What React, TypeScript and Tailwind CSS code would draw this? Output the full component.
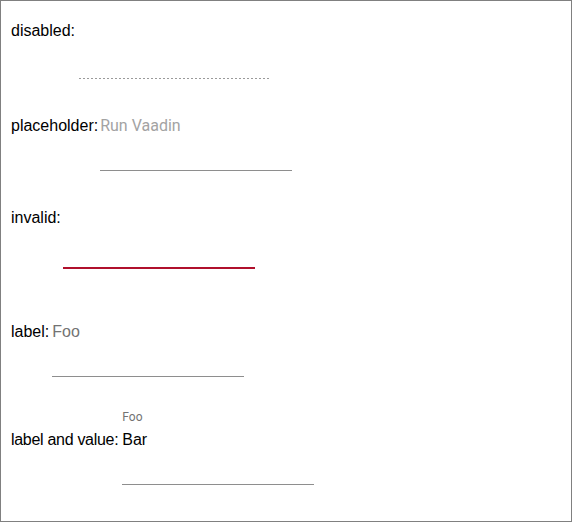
import React from "react";

const sans = "font-['Liberation_Sans',Arial,sans-serif]";
const roboto = "font-['Roboto','Liberation_Sans',sans-serif]";

export default function App() {
  return (
    <div
      className={`h-screen w-full border border-[#808080] bg-white pl-[10px] pt-[21px] text-[16px] text-black ${sans}`}
    >
      {/* disabled */}
      <div className="flex items-start gap-[4px]">
        <span className="leading-[18px]">disabled:</span>
        <div className="w-[192px]">
          <div className="h-[18px]" />
          <div className="mt-[38px] h-px bg-[linear-gradient(to_right,#9a9a9a_50%,transparent_50%)] bg-[length:4px_1px]" />
        </div>
      </div>

      {/* placeholder */}
      <div className="mt-[38px] flex items-start gap-[2px]">
        <span className="leading-[18px]">placeholder:</span>
        <div className="w-[192px]">
          <div className={`h-[18px] leading-[18px] text-[#a3a3a3] ${roboto}`}>Run Vaadin</div>
          <div className="mt-[35px] h-px bg-[#8e8e8e]" />
        </div>
      </div>

      {/* invalid */}
      <div className="mt-[38px] flex items-start gap-[2px]">
        <span className="leading-[18px]">invalid:</span>
        <div className="w-[192px]">
          <div className="h-[18px]" />
          <div className="mt-[40px] h-[2px] bg-[#b0102c]" />
        </div>
      </div>

      {/* label */}
      <div className="mt-[54px] flex items-start gap-[3px]">
        <span className="leading-[18px]">label:</span>
        <div className="w-[192px]">
          <div className="h-[18px] leading-[18px] text-[#737373]">Foo</div>
          <div className="mt-[35px] h-px bg-[#8e8e8e]" />
        </div>
      </div>

      {/* label and value */}
      <div className="mt-[33px] flex items-start gap-[4px]">
        <span className="mt-[21px] leading-[18px] tracking-[-0.3px]">label and value:</span>
        <div className="w-[192px]">
          <div className={`h-[14px] text-[12px] leading-[14px] text-[#737373] ${roboto}`}>Foo</div>
          <div className="mt-[7px] h-[18px] leading-[18px]">Bar</div>
          <div className="mt-[35px] h-px bg-[#8e8e8e]" />
        </div>
      </div>
    </div>
  );
}
